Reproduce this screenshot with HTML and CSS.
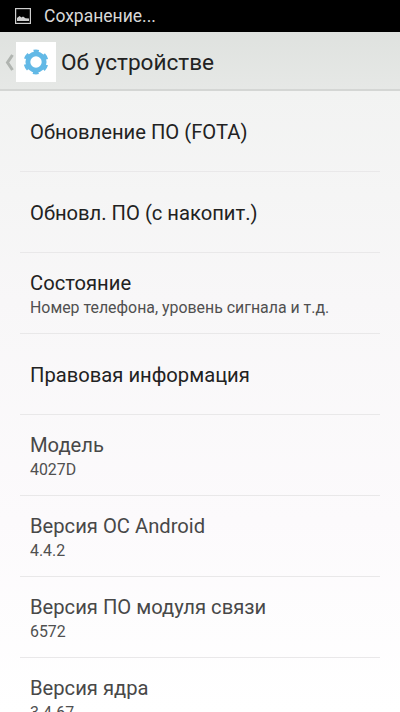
FILE: index.html
```html
<!DOCTYPE html>
<html lang="ru">
<head>
<meta charset="utf-8">
<title>Об устройстве</title>
<link rel="stylesheet" href="styles.css">
</head>
<body>
<div class="screen">
  <div class="status">
    <svg class="status-icon" viewBox="0 0 16 16"><rect x="0.6" y="0.6" width="14.800" height="14.800" fill="none" stroke="#cfcfcf" stroke-width="1.200"/><path d="M2 13V10l2.500-2 2 1.500 1.500-1 2.500 1.700 3.500.3V13z" fill="#cfcfcf"/></svg>
    <span class="status-text">Сохранение...</span>
  </div>
  <div class="bar">
    <svg class="back" viewBox="0 0 9 17"><path d="M7.500 1 2.500 8.500l5 7.500" fill="none" stroke="#b0b4b0" stroke-width="3"/></svg>
    <div class="app-icon">
      <svg viewBox="0 0 24 24"><circle cx="12" cy="12" r="7.500" fill="none" stroke="#62b9e6" stroke-width="4.500"/><circle cx="12" cy="12" r="10" fill="none" stroke="#62b9e6" stroke-width="3" stroke-dasharray="5.200 5.270" stroke-dashoffset="2.600" transform="rotate(-90 12 12)"/></svg>
    </div>
    <span class="bar-title">Об устройстве</span>
  </div>
  <div class="list">
    <div class="row single"><div class="title dark">Обновление ПО (FOTA)</div></div>
    <div class="row single"><div class="title dark">Обновл. ПО (с накопит.)</div></div>
    <div class="row"><div class="title dark">Состояние</div><div class="sub">Номер телефона, уровень сигнала и т.д.</div></div>
    <div class="row single"><div class="title dark">Правовая информация</div></div>
    <div class="row"><div class="title">Модель</div><div class="sub">4027D</div></div>
    <div class="row"><div class="title">Версия ОС Android</div><div class="sub">4.4.2</div></div>
    <div class="row"><div class="title">Версия ПО модуля связи</div><div class="sub">6572</div></div>
    <div class="row"><div class="title">Версия ядра</div><div class="sub">3.4.67</div></div>
  </div>
</div>
</body>
</html>
```
FILE: styles.css
```css
html, body { margin: 0; padding: 0; }
body { font-family: Roboto, "Noto Sans", sans-serif; }
.screen {
  width: 400px;
  height: 712px;
  overflow: hidden;
  display: flex;
  flex-direction: column;
  background: linear-gradient(#f2f3f2 90px, #f8f7f8 300px, #fcfafc 520px, #ffffff 712px);
}
.status {
  height: 32px;
  flex: none;
  background: #000;
  display: flex;
  align-items: center;
  padding-left: 15px;
  gap: 13px;
}
.status-icon { width: 16px; height: 16px; }
.status-text { color: #d8d8d8; font-size: 17.500px; }
.bar {
  height: 59px;
  flex: none;
  box-sizing: border-box;
  padding-top: 3px;
  border-bottom: 2px solid #d4d6d4;
  display: flex;
  align-items: center;
  background: linear-gradient(#dfe2df, #e6e8e6);
}
.back { width: 9px; height: 17px; margin-left: 5px; margin-right: 2px; }
.app-icon {
  width: 40px;
  height: 40px;
  background: #fff;
  display: flex;
  align-items: center;
  justify-content: center;
}
.app-icon svg { width: 26px; height: 26px; }
.bar-title { font-size: 22.600px; color: #222; margin-left: 5px; }
.list { display: flex; flex-direction: column; padding: 0 20px; }
.row {
  flex: none;
  height: 81px;
  box-sizing: border-box;
  border-bottom: 1px solid #e9e8e9;
  padding: 3px 0 0 10px;
  display: flex;
  flex-direction: column;
  justify-content: center;
}
.row.single { padding-top: 1px; }
.title { font-size: 20.200px; line-height: 26px; color: #484848; }
.title.dark { color: #222; }
.sub { font-size: 15.900px; line-height: 22px; margin-top: 1px; color: #505050; }
```
